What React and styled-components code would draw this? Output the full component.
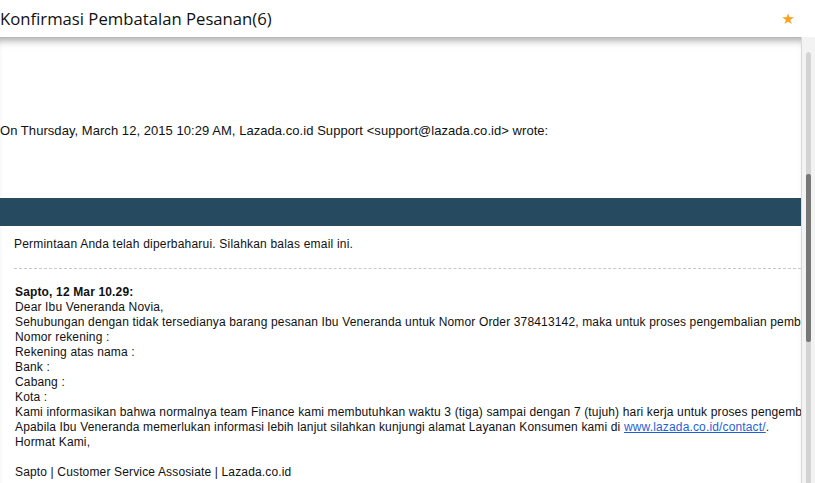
import React from 'react'
import styled, { createGlobalStyle } from 'styled-components'

const GlobalStyle = createGlobalStyle`
  html, body {
    margin: 0;
    padding: 0;
    background: #fff;
    overflow: hidden;
  }
`

const Window = styled.div`
  width: 815px;
  height: 483px;
  display: flex;
  flex-direction: column;
  background: #fff;
  overflow: hidden;
`

const Header = styled.header`
  height: 37px;
  flex: 0 0 37px;
  display: flex;
  align-items: center;
  justify-content: space-between;
  padding: 0 20px 0 0;
  font-family: "Open Sans", "Noto Sans", sans-serif;
  font-size: 16.7px;
  color: #111;
`

const Title = styled.h1`
  margin: 0;
  font-size: inherit;
  font-weight: 400;
`

const Star = styled.span`
  color: #f7a41d;
  font-size: 15px;
  font-family: "DejaVu Sans", sans-serif;
`

const Body = styled.div`
  flex: 1;
  display: flex;
  min-height: 0;
`

const Content = styled.div`
  flex: 1;
  min-width: 0;
  overflow: hidden;
  box-shadow: inset 0 9px 9px -6px rgba(0, 0, 0, 0.38);
  font-family: "Liberation Sans", Arial, sans-serif;
  color: #111;
  padding-top: 86px;
`

const Quote = styled.p`
  margin: 0;
  font-size: 13px;
  line-height: 15px;
  letter-spacing: 0.05px;
  white-space: nowrap;
`

const Band = styled.div`
  margin-top: 60px;
  height: 28px;
  background: #264b60;
`

const Notice = styled.p`
  margin: 0 0 0 14px;
  padding: 11px 0 16px;
  font-size: 12px;
  line-height: 15px;
  letter-spacing: 0.2px;
  border-bottom: 1px dashed #c8c8c8;
  white-space: nowrap;
`

const Message = styled.div`
  padding: 16px 0 0 15px;
  font-size: 12px;
  line-height: 15px;
  letter-spacing: 0.15px;
  white-space: nowrap;
`

const Line = styled.div`
  min-height: 15px;
  font-weight: ${(p) => (p.$bold ? 700 : 400)};
`

const Link = styled.a`
  color: #1f5fd6;
  text-decoration: underline;
`

const Scrollbar = styled.div`
  flex: 0 0 13px;
  border-left: 1px solid #d8d8d8;
  background: #f3f3f3;
  display: flex;
  justify-content: center;
  padding-top: 15px;
`

const Track = styled.div`
  width: 5px;
  height: 100%;
  border-radius: 3px 3px 0 0;
  background: #d4d4d4;
  padding-top: 122px;
`

const Thumb = styled.div`
  height: 168px;
  border-radius: 2px;
  background: #777;
`

export default function App() {
  return (
    <Window>
      <GlobalStyle />
      <Header>
        <Title>Konfirmasi Pembatalan Pesanan(6)</Title>
        <Star>★</Star>
      </Header>
      <Body>
        <Content>
          <Quote>
            On Thursday, March 12, 2015 10:29 AM, Lazada.co.id Support &lt;support@lazada.co.id&gt; wrote:
          </Quote>
          <Band />
          <Notice>Permintaan Anda telah diperbaharui. Silahkan balas email ini.</Notice>
          <Message>
            <Line $bold>Sapto, 12 Mar 10.29:</Line>
            <Line>Dear Ibu Veneranda Novia,</Line>
            <Line>
              Sehubungan dengan tidak tersedianya barang pesanan Ibu Veneranda untuk Nomor Order 378413142, maka untuk proses pengembalian pembayaran, mohon Ibu dapat memberikan data berikut:
            </Line>
            <Line>Nomor rekening :</Line>
            <Line>Rekening atas nama :</Line>
            <Line>Bank :</Line>
            <Line>Cabang :</Line>
            <Line>Kota :</Line>
            <Line>
              Kami informasikan bahwa normalnya team Finance kami membutuhkan waktu 3 (tiga) sampai dengan 7 (tujuh) hari kerja untuk proses pengembalian dana.
            </Line>
            <Line>
              Apabila Ibu Veneranda memerlukan informasi lebih lanjut silahkan kunjungi alamat Layanan Konsumen kami di{' '}
              <Link href="#">www.lazada.co.id/contact/</Link>.
            </Line>
            <Line>Hormat Kami,</Line>
            <Line />
            <Line>Sapto | Customer Service Assosiate | Lazada.co.id</Line>
          </Message>
        </Content>
        <Scrollbar>
          <Track>
            <Thumb />
          </Track>
        </Scrollbar>
      </Body>
    </Window>
  )
}
